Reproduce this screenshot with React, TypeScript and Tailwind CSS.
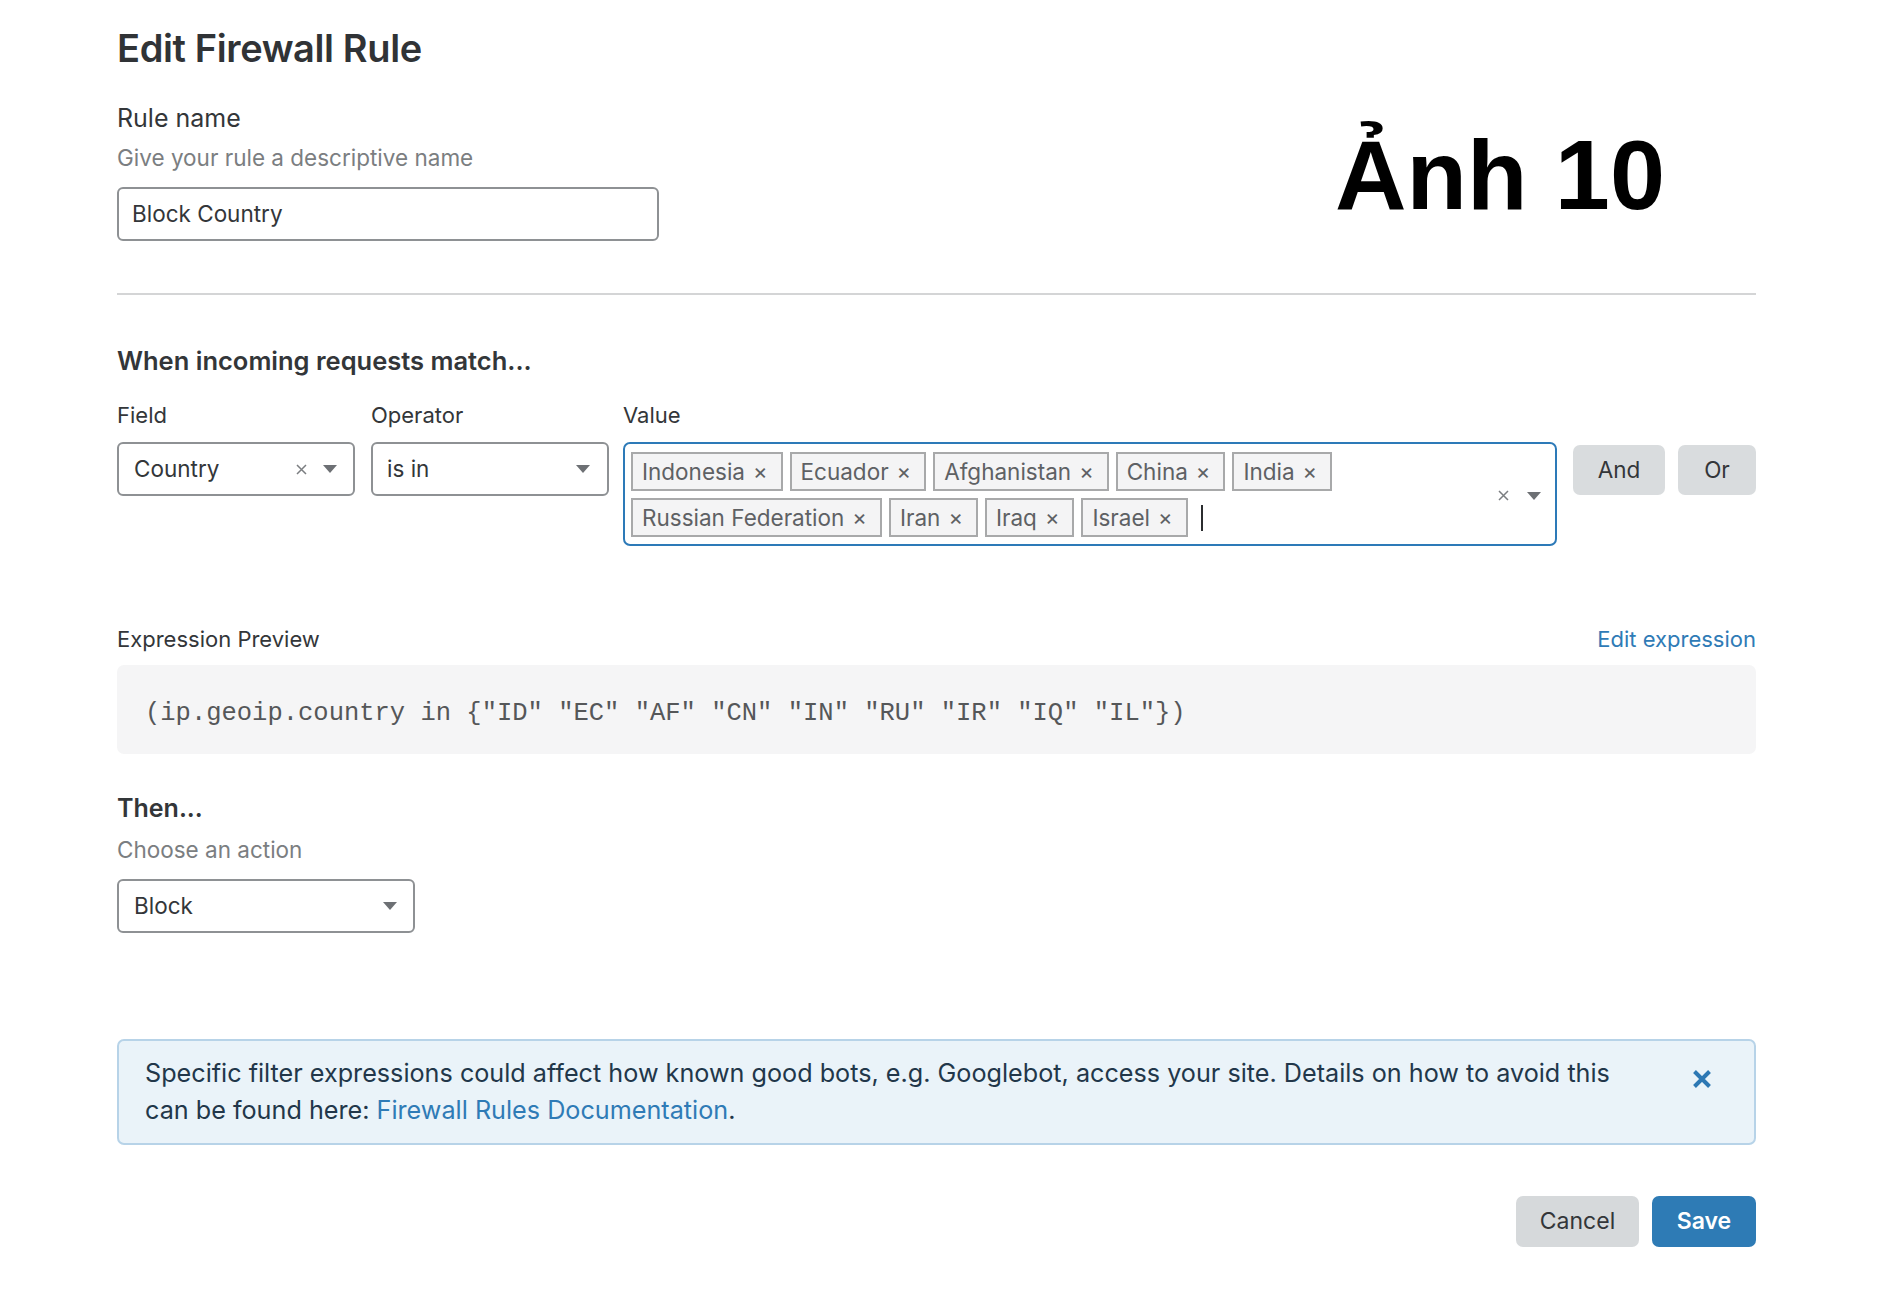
import React from "react";

const countries = [
  "Indonesia",
  "Ecuador",
  "Afghanistan",
  "China",
  "India",
  "Russian Federation",
  "Iran",
  "Iraq",
  "Israel",
];

function Caret() {
  return (
    <svg width="14" height="8" viewBox="0 0 14 8" className="shrink-0">
      <path d="M0 0H14L7 8Z" fill="#6d7074" />
    </svg>
  );
}

function ClearX() {
  return (
    <svg width="11" height="11" viewBox="0 0 11 11" className="shrink-0">
      <path d="M1 1L10 10M10 1L1 10" stroke="#7b7e81" strokeWidth="1.5" />
    </svg>
  );
}

function Tag({ label }: { label: string }) {
  return (
    <div className="flex h-[39px] items-center border-2 border-[#a8a9aa] bg-[#f4f4f5] pl-[9px] pr-[13px] text-[22.5px] text-[#5e6164]">
      <span>{label}</span>
      <span className="ml-[8px] text-[22px]">×</span>
    </div>
  );
}

export default function App() {
  return (
    <div className="min-h-[1290px] w-full bg-white font-['Inter',sans-serif] text-[#333639]">
      <div className="ml-[117px] w-[1639px]">
        {/* Header */}
        <div className="flex items-start justify-between">
          <div className="flex flex-col pt-[24px]">
            <h1 className="text-[38px] font-semibold leading-[48px] tracking-[-0.01em] text-[#303336]">
              Edit Firewall Rule
            </h1>
            <label className="mt-[30px] text-[25px] leading-[32px]">Rule name</label>
            <p className="mt-[8px] text-[22.5px] leading-[32px] text-[#7b7e81]">
              Give your rule a descriptive name
            </p>
            <div className="mt-[13px] flex h-[54px] w-[542px] items-center rounded-[6px] border-2 border-[#8e9194] pl-[13px] text-[22.5px]">
              Block Country
            </div>
          </div>
          <div className="mr-[91px] mt-[125px] font-['Liberation_Sans',Arial,sans-serif] text-[99px] font-bold leading-[99px] text-black">
            Ảnh 10
          </div>
        </div>

        <div className="mt-[52px] h-[2px] w-full bg-[#d4d5d6]" />

        {/* Match section */}
        <h2 className="mt-[50px] text-[25.5px] font-semibold leading-[32px]">
          When incoming requests match...
        </h2>

        <div className="mt-[22px] flex items-start">
          <div className="flex w-[238px] flex-col">
            <span className="text-[22px] leading-[32px]">Field</span>
            <div className="mt-[11px] flex h-[54px] items-center rounded-[6px] border-2 border-[#8e9194] pl-[15px] pr-[16px]">
              <span className="flex-1 text-[22.5px]">Country</span>
              <ClearX />
              <span className="w-[16px]" />
              <Caret />
            </div>
          </div>

          <div className="ml-[16px] flex w-[238px] flex-col">
            <span className="text-[22px] leading-[32px]">Operator</span>
            <div className="mt-[11px] flex h-[54px] items-center rounded-[6px] border-2 border-[#8e9194] pl-[14px] pr-[17px]">
              <span className="flex-1 text-[22.5px]">is in</span>
              <Caret />
            </div>
          </div>

          <div className="ml-[14px] flex w-[934px] flex-col">
            <span className="text-[22px] leading-[32px]">Value</span>
            <div className="mt-[11px] flex items-center rounded-[7px] border-2 border-[#2d7ab8] pb-[7px] pl-[6px] pr-[14px] pt-[8px]">
              <div className="flex flex-1 flex-wrap items-center gap-x-[7px] gap-y-[7px]">
                {countries.map((c) => (
                  <Tag key={c} label={c} />
                ))}
                <div className="ml-[6px] h-[26px] w-[2px] bg-[#2b2d2f]" />
              </div>
              <div className="ml-[10px] flex items-center gap-[18px] pt-[2px]">
                <ClearX />
                <Caret />
              </div>
            </div>
          </div>

          <button className="ml-[16px] mt-[46px] h-[50px] w-[92px] rounded-[7px] bg-[#d9dcde] text-[22.5px] text-[#333639]">
            And
          </button>
          <button className="ml-[13px] mt-[46px] h-[50px] w-[78px] rounded-[7px] bg-[#d9dcde] text-[22.5px] text-[#333639]">
            Or
          </button>
        </div>

        {/* Expression preview */}
        <div className="mt-[77px] flex items-center justify-between text-[22px] leading-[32px]">
          <span>Expression Preview</span>
          <a className="text-[#2f7bb6]">Edit expression</a>
        </div>
        <div className="mt-[10px] flex h-[89px] items-center rounded-[7px] bg-[#f5f5f6] pl-[28px] pt-[10px] font-['Liberation_Mono','Courier_New',monospace] text-[25.5px] text-[#555759]">
          (ip.geoip.country in {'{'}"ID" "EC" "AF" "CN" "IN" "RU" "IR" "IQ" "IL"{'}'})
        </div>

        {/* Action */}
        <h2 className="mt-[38px] text-[25px] font-semibold leading-[32px]">Then...</h2>
        <p className="mt-[10px] text-[22.5px] leading-[32px] text-[#7b7e81]">Choose an action</p>
        <div className="mt-[13px] flex h-[54px] w-[298px] items-center rounded-[6px] border-2 border-[#8e9194] pl-[15px] pr-[16px]">
          <span className="flex-1 text-[22.5px]">Block</span>
          <Caret />
        </div>

        {/* Notice */}
        <div className="mt-[106px] flex items-start rounded-[7px] border-2 border-[#b7d3e8] bg-[#eaf3f9] py-[14px] pl-[26px] pr-[42px]">
          <p className="flex-1 text-[25.2px] leading-[37px] text-[#22374a]">
            Specific filter expressions could affect how known good bots, e.g. Googlebot, access your site. Details on how to avoid this
            <br />
            can be found here: <a className="text-[#2f7bb6]">Firewall Rules Documentation</a>.
          </p>
          <button className="mt-[14px] flex h-[20px] w-[20px] items-center justify-center">
            <svg width="20" height="20" viewBox="0 0 20 20">
              <path d="M2.5 2.5L17.5 17.5M17.5 2.5L2.5 17.5" stroke="#2d78b4" strokeWidth="4" />
            </svg>
          </button>
        </div>

        {/* Footer buttons */}
        <div className="mt-[51px] flex justify-end gap-[13px]">
          <button className="h-[51px] w-[123px] rounded-[7px] bg-[#d6d9db] text-[23px] text-[#333639]">
            Cancel
          </button>
          <button className="h-[51px] w-[104px] rounded-[7px] bg-[#2e7bb5] text-[23px] font-semibold text-white">
            Save
          </button>
        </div>
      </div>
    </div>
  );
}
